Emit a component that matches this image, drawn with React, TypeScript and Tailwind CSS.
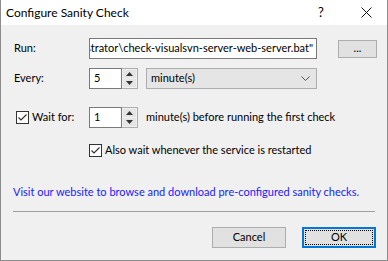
import React from 'react';

const font = { fontFamily: 'Lato, "Liberation Sans", sans-serif' };

const Check: React.FC = () => (
  <span className="w-[13px] h-[13px] border border-[#333333] bg-white flex items-center justify-center shrink-0">
    <svg width="11" height="11" viewBox="0 0 11 11">
      <path d="M1.5 5.5 L4 8 L9.5 2.5" fill="none" stroke="#333333" strokeWidth="1.2" />
    </svg>
  </span>
);

const Spin: React.FC<{ value: string }> = ({ value }) => (
  <div className="flex h-[21px]">
    <div className="w-[33px] h-full bg-white border border-[#7a7a7a] flex items-center pl-[4px]">
      {value}
    </div>
    <div className="w-[16px] h-full border border-l-0 border-[#adadad] bg-[#f0f0f0] flex flex-col p-[1px] gap-[1px]">
      <div className="flex-1 bg-[#e5e5e5] flex items-center justify-center">
        <svg width="7" height="4" viewBox="0 0 7 4"><path d="M0 4 L3.5 0 L7 4 Z" fill="#333" /></svg>
      </div>
      <div className="flex-1 bg-[#e5e5e5] flex items-center justify-center">
        <svg width="7" height="4" viewBox="0 0 7 4"><path d="M0 0 L3.5 4 L7 0 Z" fill="#333" /></svg>
      </div>
    </div>
  </div>
);

export default function App() {
  return (
    <div className="w-[388px] h-[261px] bg-[#f0f0f0] border border-t-0 border-[#8c8c8c] flex flex-col text-black text-[11px] overflow-hidden" style={font}>
      <div className="h-[25px] bg-white flex items-center shrink-0">
        <span className="pl-[5px] flex-1 text-[12px]">Configure Sanity Check</span>
        <span className="w-[8px] text-[13px] mr-[35px]">?</span>
        <svg width="11" height="11" viewBox="0 0 11 11" className="mr-[15px]">
          <path d="M0.5 0.5 L10.5 10.5 M10.5 0.5 L0.5 10.5" stroke="#111" strokeWidth="1" />
        </svg>
      </div>

      <div className="flex flex-col pt-[13px]">
        <div className="flex items-center h-[21px]">
          <span className="w-[88px] pl-[13px]">Run:</span>
          <div className="w-[228px] h-full bg-white border border-[#7a7a7a] flex justify-end items-center overflow-hidden whitespace-nowrap pr-[3px]">
            <span className="shrink-0">C:\Users\Administrator\check-visualsvn-server-web-server.bat"</span>
          </div>
          <button className="ml-[21px] w-[39px] h-[18px] bg-[#e1e1e1] border border-[#adadad] flex items-center justify-center leading-none pb-[3px]">
            ...
          </button>
        </div>

        <div className="flex items-center h-[21px] mt-[9px]">
          <span className="w-[88px] pl-[13px]">Every:</span>
          <Spin value="5" />
          <div className="ml-[8px] w-[171px] h-full bg-[#e5e5e5] border border-[#adadad] flex items-center justify-between pl-[4px] pr-[6px]">
            <span>minute(s)</span>
            <svg width="9" height="6" viewBox="0 0 9 6"><path d="M0.5 0.5 L4.5 4.5 L8.5 0.5" fill="none" stroke="#555" strokeWidth="1" /></svg>
          </div>
        </div>

        <div className="flex items-center h-[21px] mt-[18px]">
          <div className="w-[88px] pl-[15px] flex items-center gap-[3px]">
            <Check />
            <span>Wait for:</span>
          </div>
          <Spin value="1" />
          <span className="ml-[8px]">minute(s) before running the first check</span>
        </div>

        <div className="flex items-center h-[13px] mt-[16px] pl-[88px] gap-[3px]">
          <Check />
          <span>Also wait whenever the service is restarted</span>
        </div>

        <div className="mt-[27px] pl-[12px] leading-[15px] text-[#1a1aff] whitespace-nowrap">
          Visit our website to browse and download pre-configured sanity checks.
        </div>

        <div className="mt-[12px] mx-[12px] h-px bg-[#a0a0a0]" />

        <div className="flex justify-end gap-[16px] mt-[15px] pr-[11px]">
          <button className="w-[74px] h-[21px] bg-[#e1e1e1] border border-[#adadad] flex items-center justify-center">
            Cancel
          </button>
          <button className="w-[74px] h-[21px] bg-[#e1e1e1] border-2 border-[#0078d7] flex items-center justify-center p-[1px]">
            <span className="w-full h-full border border-dotted border-black flex items-center justify-center">OK</span>
          </button>
        </div>
      </div>
    </div>
  );
}
